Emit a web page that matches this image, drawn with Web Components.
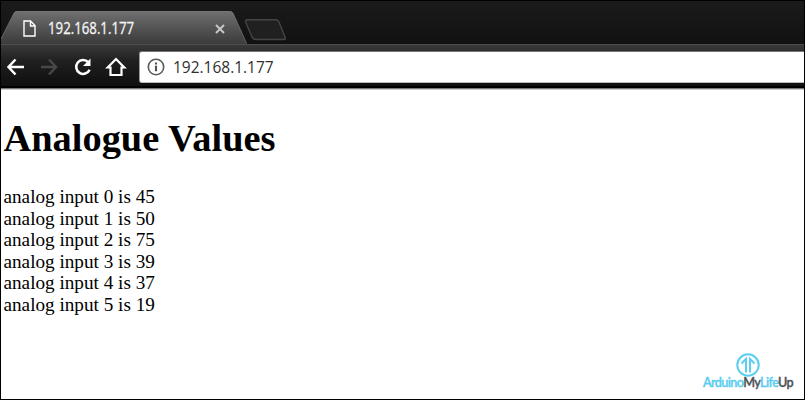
<!DOCTYPE html>
<html lang="en"><head><meta charset="utf-8"><title>192.168.1.177</title>
<style>html,body{margin:0;width:805px;height:400px;overflow:hidden;background:#000}</style></head>
<body><browser-window></browser-window>
<script>
const define=(name,html)=>customElements.define(name,class extends HTMLElement{
  constructor(){super();this.attachShadow({mode:'open'}).innerHTML=html;}
});
define('tab-strip',`<style>
:host{display:flex;height:43px;background:linear-gradient(#1b1b1b,#111)}
.tab{position:relative;width:246px;height:43px;flex:none}
.shape{position:absolute;inset:0;display:block}
.content{position:relative;display:flex;align-items:center;height:33px;padding:10px 0 0 22px;box-sizing:content-box}
.label{font:15.4px/20px "Open Sans",sans-serif;color:#f4f4f4;-webkit-text-stroke:.3px #f4f4f4;margin-left:11.5px;padding-top:2px;width:168.5px;white-space:nowrap}
.label span{display:inline-block;transform-origin:left;transform:scaleX(.86)}
svg{flex:none;display:block}
.new{margin:18px 0 0 -3px}
</style>
<div class="tab">
<svg class="shape" width="246" height="43"><defs><linearGradient id="g" x2="0" y2="1"><stop stop-color="#707070"/><stop offset=".45" stop-color="#575757"/><stop offset="1" stop-color="#3b3b3b"/></linearGradient></defs><path d="M0 43V38L13 12Q14 10 16 10H228Q231 10 232 12L244 39Q246 42 246 43Z" fill="url(#g)"/><path d="M0 38L13 12Q14 10.500 16 10.500H228Q231 10.500 232 12L244 39Q245 42 246 42.500" fill="none" stroke="#777" stroke-opacity=".75"/></svg>
<div class="content"><svg width="13" height="17" viewBox="0 0 13 17" fill="none" stroke="#fff" stroke-width="1.400" style="position:relative;top:1px"><path d="M1 1H7.500L12 5.500V16H1Z"/><path d="M7.500 1V6H12"/></svg><div class="label"><span><slot></slot></span></div>
<svg width="10" height="10" viewBox="0 0 10 10" style="margin-left:-1px;position:relative;top:1px"><path d="M1 1L9 9M9 1L1 9" stroke="#c8c8c8" stroke-width="1.900"/></svg></div></div>
<svg class="new" width="44" height="22" viewBox="0 0 44 22"><path d="M3 .800H32Q34 .800 35 3L41 18Q42 20.500 40 20.500H12Q9 20.500 8 18L2 4Q1 .800 3 .800Z" fill="#202020" stroke="#454545" stroke-width="1.400"/></svg>`);
define('address-box',`<style>
:host{display:flex;align-items:center;box-sizing:border-box;flex:1;height:32px;background:#fff;border:1px solid #777;border-width:1px 0 1px 1px;border-color:#777 #777 #bbb #999;border-radius:3px 0 0 3px;padding-left:6.5px}
svg{flex:none}.url{margin-left:8.5px;font:17px/22px "Open Sans",sans-serif;color:#303030;white-space:nowrap;transform-origin:left;transform:scaleX(.91)}
</style><svg width="18" height="18" viewBox="0 0 18 18"><circle cx="9" cy="9" r="7.700" fill="none" stroke="#5a5a5a" stroke-width="1.600"/><path d="M9 7.700V13.200M9 4.600V6.500" stroke="#4f4f4f" stroke-width="2.100"/></svg><div class="url"><slot></slot></div>`);
define('nav-bar',`<style>
:host{display:flex;box-sizing:border-box;height:39px;padding:7px 0 0 4px;background:linear-gradient(#4d4d4d 0,#4d4d4d 1px,#393939 1px,#202020 17px,#111 38px)}
.icons{display:flex;width:134px;height:32px;align-items:center}
svg{display:block;flex:none;fill:none;stroke:#fff;stroke-width:2.500}
</style><div class="icons">
<svg width="22" height="20" viewBox="0 0 22 20"><path d="M10.500 2.500L3.500 10L10.500 17.500M4 10H19"/></svg>
<svg width="22" height="20" viewBox="0 0 22 20" style="margin-left:11px;stroke:#484848"><path d="M11 2.500L18 10L11 17.500M3 10H18"/></svg>
<svg width="22" height="20" viewBox="0 0 22 20" style="margin-left:12px"><path d="M16.300 5.100A7 7 0 1 0 17.600 12.700"/><path d="M18.500 1.500V9H11Z" fill="#fff" stroke="none"/></svg>
<svg width="22" height="20" viewBox="0 0 22 20" style="margin-left:11px;stroke-width:2.200"><path d="M5.500 18V10.500H2.700L11 2L19.300 10.500H16.500V18Z"/></svg>
</div><address-box>192.168.1.177</address-box>`);
define('brand-logo',`<style>:host{display:flex;flex-direction:column;align-items:center;width:92px}
svg{display:block}.name{font:12.6px/14px Lato,sans-serif;font-weight:600;letter-spacing:-.6px;white-space:nowrap;color:#58cdf0;-webkit-text-stroke:.35px currentColor;margin-top:-1px}.name b{color:#505357;font-weight:600}</style>
<svg width="24" height="24" viewBox="0 0 24 24" fill="none" stroke="#5bcff2"><circle cx="12" cy="12" r="10.700" stroke-width="2"/><path d="M10 19.500V6L5.500 10.500M14 19.500V6L18.500 10.500" stroke-width="2"/></svg>
<div class="name">Arduino<b>My</b>Life<b>Up</b></div>`);
define('value-page',`<style>
:host{display:block;position:relative;flex:1;background:#fff;color:#000;font:19.2px/21.6px "Liberation Serif",serif;padding-left:2.5px}
h1{font-size:38.400px;line-height:44px;margin:0;padding-top:26px;white-space:nowrap}
.rows{margin-top:26px;display:flex;flex-direction:column}
.rows div{white-space:nowrap}
brand-logo{position:absolute;right:10px;bottom:9px}
</style><h1>Analogue Values</h1><div class="rows"><div>analog input 0 is 45</div><div>analog input 1 is 50</div><div>analog input 2 is 75</div><div>analog input 3 is 39</div><div>analog input 4 is 37</div><div>analog input 5 is 19</div></div><brand-logo></brand-logo>`);
define('browser-window',`<style>:host{display:flex;flex-direction:column;box-sizing:border-box;width:805px;height:400px;border:1px solid #000;background:#000}
.edge{height:7px;background:linear-gradient(#111 0,#111 3px,#000 3px,#000 5px,#777 5px,#777 6px,#ccc 6px)}
</style><tab-strip>192.168.1.177</tab-strip><nav-bar></nav-bar><div class="edge"></div><value-page></value-page>`);
</script></body></html>
